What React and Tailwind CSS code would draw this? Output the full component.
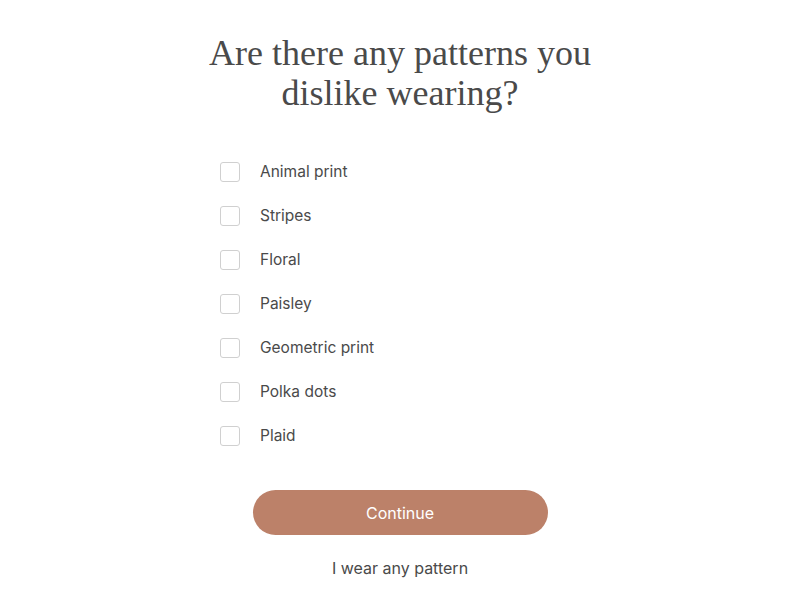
const options = [
  "Animal print",
  "Stripes",
  "Floral",
  "Paisley",
  "Geometric print",
  "Polka dots",
  "Plaid",
];

export default function App() {
  return (
    <div className="min-h-screen bg-white flex flex-col items-center text-[#4a4a4a]">
      <h1 className="mt-[33px] w-[440px] text-center text-[36px] leading-[40px] font-['Liberation_Serif',serif] text-[#4a4a4a]">
        Are there any patterns you dislike wearing?
      </h1>

      <div className="mt-[37px] w-[360px] flex flex-col">
        {options.map((o) => (
          <label key={o} className="h-[44px] flex items-center cursor-pointer">
            <span className="w-5 h-5 rounded-[3px] border border-[#d0d0d0] bg-white" />
            <span className="ml-5 text-[15.5px] font-['Inter',sans-serif] text-[#4a4a4a]">
              {o}
            </span>
          </label>
        ))}
      </div>

      <button className="mt-[32px] w-[295px] h-[45px] rounded-full bg-[#bc8169] text-white text-[16px] font-['Inter',sans-serif]">
        Continue
      </button>

      <button className="mt-[21px] text-[16px] font-['Inter',sans-serif] text-[#4a4a4a]">
        I wear any pattern
      </button>
    </div>
  );
}
